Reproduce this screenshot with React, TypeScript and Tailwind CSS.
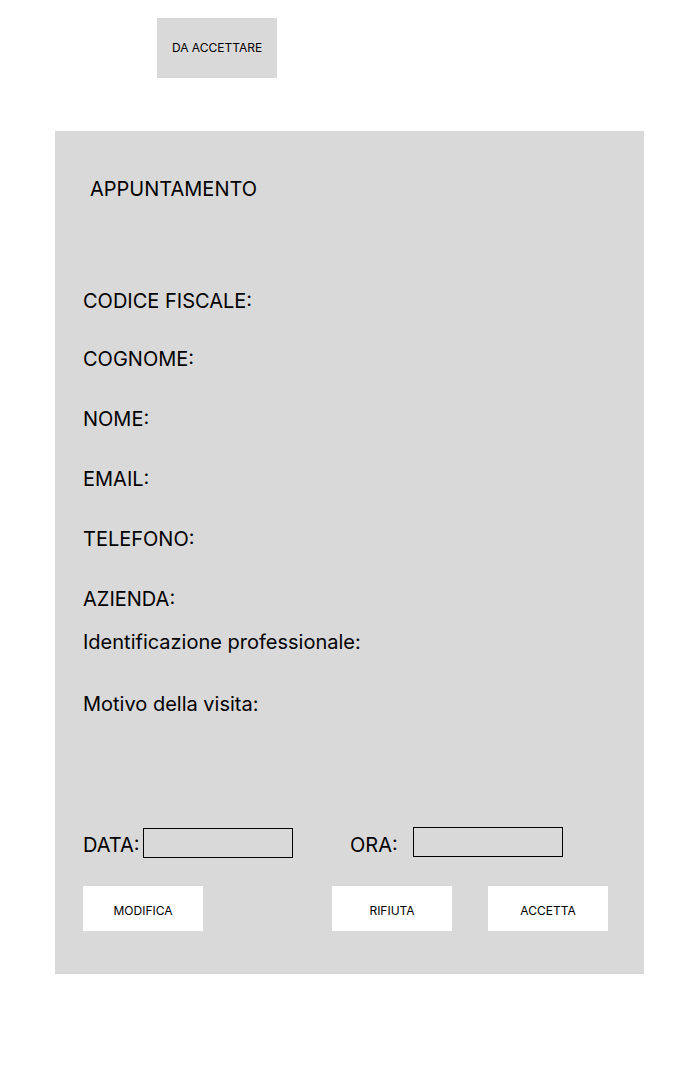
import React from "react";

const Label = ({ children, className = "" }: { children: React.ReactNode; className?: string }) => (
  <div className={`text-[20px] leading-[24px] text-black ${className}`}>{children}</div>
);

const Btn = ({ children }: { children: React.ReactNode }) => (
  <button className="w-[120px] h-[45px] bg-white text-[12px] text-black flex items-center justify-center pt-[4px]">
    {children}
  </button>
);

export default function App() {
  return (
    <div className="w-[692px] min-h-[1069px] bg-white font-['Inter',sans-serif] text-black">
      <div className="pt-[18px] pl-[157px]">
        <div className="w-[120px] h-[60px] bg-[#d9d9d9] flex items-center justify-center text-[12px]">
          DA ACCETTARE
        </div>
      </div>
      <div className="ml-[55px] mt-[53px] w-[589px] h-[843px] bg-[#d9d9d9] pl-[28px] pt-[46px] flex flex-col">
        <Label className="ml-[7px]">APPUNTAMENTO</Label>
        <Label className="mt-[88px]">CODICE FISCALE:</Label>
        <Label className="mt-[34px]">COGNOME:</Label>
        <Label className="mt-[36px]">NOME:</Label>
        <Label className="mt-[36px]">EMAIL:</Label>
        <Label className="mt-[36px]">TELEFONO:</Label>
        <Label className="mt-[36px]">AZIENDA:</Label>
        <Label className="mt-[19px]">Identificazione professionale:</Label>
        <Label className="mt-[38px]">Motivo della visita:</Label>
        <div className="mt-[111px] flex items-start h-[32px]">
          <Label className="mt-[6px] w-[60px]">DATA:</Label>
          <div className="mt-[1px] w-[150px] h-[30px] border border-black" />
          <Label className="mt-[6px] ml-[57px] w-[63px]">ORA:</Label>
          <div className="w-[150px] h-[30px] border border-black" />
        </div>
        <div className="mt-[27px] flex">
          <Btn>MODIFICA</Btn>
          <div className="ml-[129px]">
            <Btn>RIFIUTA</Btn>
          </div>
          <div className="ml-[36px]">
            <Btn>ACCETTA</Btn>
          </div>
        </div>
      </div>
    </div>
  );
}
